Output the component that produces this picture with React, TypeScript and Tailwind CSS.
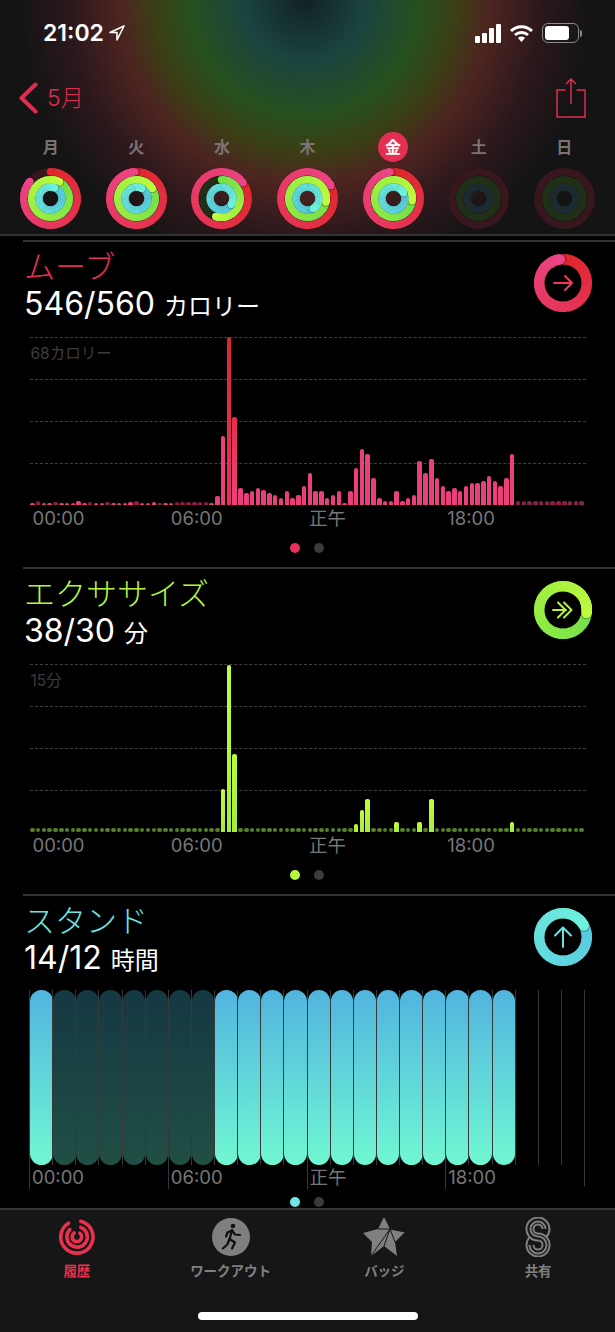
type Lap = { p: number; r: number; w: number; from: string; to: string; track: string };

const moveColors = { from: "#e0272c", to: "#ec4486", track: "#e0305a30" };
const exColors = { from: "#74e04a", to: "#bdfb3e", track: "#7fe03a26" };
const standColors = { from: "#58cae0", to: "#6ff0dc", track: "#55c0e026" };

function mix(a: string, b: string, t: number) {
  const c = (h: string, i: number) => parseInt(h.slice(i, i + 2), 16);
  const v = [1, 3, 5].map((i) => Math.round(c(a, i) + (c(b, i) - c(a, i)) * t));
  return `rgb(${v[0]},${v[1]},${v[2]})`;
}

function pt(r: number, deg: number, c: number) {
  const a = ((deg - 90) * Math.PI) / 180;
  return [c + r * Math.cos(a), c + r * Math.sin(a)];
}

function Arc({ lap, c }: { lap: Lap; c: number }) {
  const { p, r, w, from, to, track } = lap;
  const end = p * 360;
  const start = Math.max(0, end - 360);
  const segs = [];
  for (let d = start; d < end; d += 4) {
    const [x1, y1] = pt(r, d, c);
    const [x2, y2] = pt(r, Math.min(d + 6, end), c);
    segs.push({ d, path: `M${x1} ${y1}A${r} ${r} 0 0 1 ${x2} ${y2}`, color: mix(from, to, (d - start) / Math.max(end - start, 1)) });
  }
  const [hx, hy] = pt(r, end, c);
  const [sx, sy] = pt(r, end + 2, c);
  const [bx, by] = pt(r, start, c);
  return (
    <g fill="none">
      <circle cx={c} cy={c} r={r} stroke={track} strokeWidth={w} />
      {p > 0 && (
        <>
          {p <= 1 && <circle cx={bx} cy={by} r={w / 2} fill={from} />}
          {segs.map((s) => (
            <path key={s.d} d={s.path} stroke={s.color} strokeWidth={w} />
          ))}
          <circle cx={sx} cy={sy} r={w / 2 + 0.4} fill="#000" fillOpacity={0.3} />
          {segs.slice(-8).map((s) => (
            <path key={s.d} d={s.path} stroke={s.color} strokeWidth={w} />
          ))}
          <circle cx={hx} cy={hy} r={w / 2} fill={to} />
        </>
      )}
    </g>
  );
}

function DayRings({ move, ex, stand }: { move: number; ex: number; stand: number }) {
  return (
    <svg viewBox="0 0 61 61" className="w-[61px] h-[61px] mx-auto block">
      <circle cx="30.5" cy="30.5" r="19.25" fill="none" stroke="#111" strokeWidth="23" />
      <Arc c={30.5} lap={{ p: move, r: 26.7, w: 7.4, ...moveColors }} />
      <Arc c={30.5} lap={{ p: ex, r: 18.8, w: 7.4, ...exColors }} />
      <Arc c={30.5} lap={{ p: stand, r: 11.4, w: 7.2, ...standColors }} />
    </svg>
  );
}

const days = [
  { label: "月", move: 0.86, ex: 1.08, stand: 1.06 },
  { label: "火", move: 0.99, ex: 1.16, stand: 1.08 },
  { label: "水", move: 1.15, ex: 0.55, stand: 1.34 },
  { label: "木", move: 1.17, ex: 1.28, stand: 1.42 },
  { label: "金", move: 0.98, ex: 1.27, stand: 1.17 },
  { label: "土", move: 0, ex: 0, stand: 0 },
  { label: "日", move: 0, ex: 0, stand: 0 },
];

const moveBars = [
  2, 4, 2, 2, 3, 2, 2, 2, 4, 2, 3, 2, 2, 3, 2, 2, 2, 3, 4, 2, 2, 3, 2, 2, 2, 3, 3, 3, 3, 3, 3, 2, 9,
  69, 168, 88, 17, 12, 14, 17, 15, 12, 10, 7, 14, 7, 10, 19, 32, 14, 14, 7, 10, 14, 2, 14, 37, 56, 51, 27, 7, 4, 4, 14, 4, 7, 10,
  44, 32, 46, 27, 19, 14, 17, 14, 19, 22, 22, 24, 29, 24, 19, 27, 51,
];
const moveDim = [1, 4, 10, 13, 18, 22, 25, 26, 27, 28, 29, 30];

const exBars: Record<number, number> = { 33: 43, 34: 167, 35: 78, 56: 8, 57: 22, 58: 33, 63: 10, 67: 10, 69: 33, 83: 10 };

function CenterArrow({ kind, color }: { kind: "move" | "ex" | "stand"; color: string }) {
  return (
    <g fill="none" stroke={color} strokeWidth="2" strokeLinecap="round" strokeLinejoin="round">
      {kind === "move" && <path d="M20 29h18M31 22l7 7-7 7" />}
      {kind === "ex" && <path d="M19 29h13M24 21.500l7.500 7.500-7.500 7.500M30 21.500l7.500 7.500-7.500 7.500" />}
      {kind === "stand" && <path d="M29 39V20M21 27.500l8-8 8 8" />}
    </g>
  );
}

function BigRing({ kind, p, colors, arrow }: { kind: "move" | "ex" | "stand"; p: number; colors: typeof moveColors; arrow: string }) {
  return (
    <svg viewBox="0 0 58 58" className="w-[58px] h-[58px] mt-[5px] shrink-0">
      <Arc c={29} lap={{ p, r: 23.8, w: 10.4, ...colors }} />
      <CenterArrow kind={kind} color={arrow} />
    </svg>
  );
}

function SectionHead({ title, titleColor, value, unit, children }: { title: string; titleColor: string; value: string; unit: string; children: React.ReactNode }) {
  return (
    <div className="flex justify-between pr-[23px] h-[74px]">
      <div className="pl-px">
        <div className={`text-[31px] leading-[36px] font-light ${titleColor}`}>{title}</div>
        <div className="flex items-baseline h-[38px] text-white">
          <span className="text-[32px] leading-[38px]">{value}</span>
          <span className="text-[24px] leading-[38px] ml-[9px]">{unit}</span>
        </div>
      </div>
      {children}
    </div>
  );
}

function GridRows({ label }: { label: string }) {
  return (
    <div className="absolute inset-0 grid grid-rows-4">
      {[0, 1, 2, 3].map((i) => (
        <div key={i} className="border-t border-dashed border-[#404040]">
          {i === 0 && <div className="pl-px pt-[6px] text-[15.500px] leading-[20px] text-[#3c3c3c]">{label}</div>}
        </div>
      ))}
    </div>
  );
}

function AxisLabels() {
  return (
    <div className="grid grid-cols-4 h-[28px] items-center pl-[3px] text-[18.500px] text-[#777]">
      <span>00:00</span>
      <span>06:00</span>
      <span>正午</span>
      <span>18:00</span>
    </div>
  );
}

function PageDots({ active }: { active: string }) {
  return (
    <div className="flex justify-center gap-[14px] pr-[24px]">
      <span className={`w-[10px] h-[10px] rounded-full ${active}`} />
      <span className="w-[10px] h-[10px] rounded-full bg-[#3b3b3b]" />
    </div>
  );
}

function HistoryIcon() {
  return (
    <svg viewBox="0 0 40 40" className="w-[38px] h-[40px]" fill="none" stroke="#e8304f" strokeWidth="3.800" strokeLinecap="round">
      <path d="M24 3.500A17 17 0 1 1 11 5.500" />
      <path d="M24 9.800A10.800 10.800 0 1 1 12.500 12.200" />
      <path d="M23 16A5 5 0 1 1 17 15.800" />
    </svg>
  );
}

function WorkoutIcon() {
  return (
    <svg viewBox="0 0 38 40" className="w-[38px] h-[40px]">
      <circle cx="19" cy="20" r="19" fill="#7f7f7f" />
      <circle cx="21" cy="9" r="2.300" fill="#101010" />
      <g fill="none" stroke="#101010" strokeWidth="2.200" strokeLinecap="round" strokeLinejoin="round">
        <path d="M20 13l-2.500 9.500" />
        <path d="M20 13.500l-4.500 2-1.500 4" />
        <path d="M20 13.500l3 4 5 .5" />
        <path d="M17.500 22l5.500 3.500-3 6" />
        <path d="M17.500 22l-2.200 5.500-4.500 4" />
      </g>
    </svg>
  );
}

function BadgeIcon() {
  return (
    <svg viewBox="0 0 42 40" className="w-[42px] h-[40px]">
      <path d="M21 0l6 12 15 3-10 10 2 14-13-10-13 10 1-14L0 16l15-4z" fill="#808080" />
      <path d="M27 12L8 39M27 12L21 29M27 12l15 3M27 12l5 13M27 12L15 12" stroke="#161616" strokeWidth="1" fill="none" />
    </svg>
  );
}

function ShareIcon() {
  return (
    <svg viewBox="0 0 26 40" className="w-[26px] h-[40px]" fill="none" stroke="#808080" strokeWidth="2">
      <path d="M21.100 20.100A11.500 11.500 0 1 0 13 23.500A4.500 4.500 0 1 1 8.500 28" />
      <path d="M4.900 19.900A11.500 11.500 0 1 0 13 16.500A4.500 4.500 0 1 1 17.500 12" />
      <path d="M20.500 12A7.500 7.500 0 1 0 13 19.500A8.500 8.500 0 1 1 4.500 28" />
    </svg>
  );
}

export default function App() {
  return (
    <div className="w-[615px] h-[1332px] overflow-hidden bg-black flex flex-col [font-family:Inter,'Noto_Sans_CJK_JP',sans-serif]">
      <header className="h-[236px] shrink-0 border-b-2 border-[#333] bg-[#141414] bg-[radial-gradient(circle_at_305px_0px,#122125_0px,#1a4340_60px,#27501f_115px,#3a3f15_150px,#4d2420_185px,#2c181c_235px,#141414_285px)]">
        <div className="h-[66px] flex items-center justify-between pl-[43px] pr-[33px]">
          <div className="flex items-center gap-[5px] text-white">
            <span className="text-[23px] font-semibold">21:02</span>
            <svg viewBox="0 0 16 16" className="w-[16px] h-[16px]" fill="none" stroke="#fff" strokeWidth="1.600" strokeLinejoin="round">
              <path d="M15 1L1 7.500h7V15z" />
            </svg>
          </div>
          <div className="flex items-center gap-[8px]">
            <div className="flex items-end gap-[2px] h-[19px]">
              <span className="w-[5px] h-[7px] rounded-[1px] bg-white" />
              <span className="w-[5px] h-[10px] rounded-[1px] bg-white" />
              <span className="w-[5px] h-[15px] rounded-[1px] bg-white" />
              <span className="w-[5px] h-[19px] rounded-[1px] bg-white" />
            </div>
            <svg viewBox="0 0 25 19" className="w-[25px] h-[19px]" fill="none" stroke="#fff" strokeWidth="3">
              <path d="M2 7a15 15 0 0 1 21 0M6 11a9.500 9.500 0 0 1 13 0" />
              <path d="M12.500 18l-3.500-4a5 5 0 0 1 7 0z" fill="#fff" stroke="none" />
            </svg>
            <div className="flex items-center">
              <div className="w-[37px] h-[20px] rounded-[6px] border-[1.5px] border-[#8a8a8a] p-[2px]">
                <div className="w-[24px] h-full rounded-[3px] bg-white" />
              </div>
              <span className="w-[2px] h-[7px] ml-px rounded-r-full bg-[#8a8a8a]" />
            </div>
          </div>
        </div>
        <div className="h-[60px] mt-[2px] flex items-center justify-between pl-[19px] pr-[29px]">
          <div className="flex items-center gap-[9px] text-[#e02c50]">
            <svg viewBox="0 0 19 32" className="w-[19px] h-[32px]" fill="none" stroke="#e02c50" strokeWidth="4" strokeLinecap="round" strokeLinejoin="round">
              <path d="M16.500 2.500L2.500 16l14 13.500" />
            </svg>
            <span className="text-[23px] leading-[30px] font-light">5月</span>
          </div>
          <svg viewBox="0 0 30 40" className="w-[30px] h-[40px]" fill="none" stroke="#e02c50" strokeWidth="1.500">
            <path d="M9.500 12H1v27h28V12h-8.500M15 26V1M10 6l5-5 5 5" />
          </svg>
        </div>
        <div className="grid grid-cols-7 px-[8px]">
          {days.map((d) => (
            <div key={d.label}>
              <div className="h-[38px] flex items-center justify-center text-[16px] font-semibold text-[#7c7474]">
                {d.label === "金" ? (
                  <span className="w-[30px] h-[30px] rounded-full bg-[#e42f52] text-white flex items-center justify-center">{d.label}</span>
                ) : (
                  d.label
                )}
              </div>
              <div className="mt-[2px]">
                <DayRings move={d.move} ex={d.ex} stand={d.stand} />
              </div>
            </div>
          ))}
        </div>
      </header>

      <main className="flex-1 min-h-0 pt-[4px]">
        <section className="ml-[23px] h-[327px] border-t-2 border-[#333] pt-[7px]">
          <SectionHead title="ムーブ" titleColor="text-[#e6304f]" value="546/560" unit="カロリー">
            <BigRing kind="move" p={0.98} colors={moveColors} arrow="#f0385a" />
          </SectionHead>
          <div className="ml-[6.500px] w-[556px] mt-[14px]">
            <div className="relative h-[168px]">
              <GridRows label="68カロリー" />
              <div className="absolute inset-0 flex items-end">
                {Array.from({ length: 96 }).map((_, i) => {
                  const h = i < moveBars.length ? moveBars[i] : 4;
                  const dim = i >= moveBars.length || moveDim.includes(i);
                  return (
                    <div key={i} className="w-[5.79px] shrink-0 flex justify-center">
                      <div
                        className={`w-[4.500px] rounded-t-[2px] ${
                          dim
                            ? "bg-[#8a2048]"
                            : h > 100
                              ? "bg-gradient-to-t from-[#ea3060] to-[#d6282e]"
                              : h > 80
                                ? "bg-gradient-to-t from-[#ee4080] to-[#e62c50]"
                                : "bg-[#ea3f7c]"
                        }`}
                        style={{ height: h }}
                      />
                    </div>
                  );
                })}
              </div>
            </div>
            <AxisLabels />
          </div>
          <div className="mt-[10px]">
            <PageDots active="bg-[#e8305a]" />
          </div>
        </section>

        <section className="ml-[23px] h-[327px] border-t-2 border-[#333] pt-[7px]">
          <SectionHead title="エクササイズ" titleColor="text-[#b6f43c]" value="38/30" unit="分">
            <BigRing kind="ex" p={1.27} colors={exColors} arrow="#b6f43c" />
          </SectionHead>
          <div className="ml-[6.500px] w-[556px] mt-[14px]">
            <div className="relative h-[168px]">
              <GridRows label="15分" />
              <div className="absolute inset-0 flex items-end">
                {Array.from({ length: 96 }).map((_, i) => (
                  <div key={i} className="w-[5.79px] shrink-0 flex justify-center">
                    {exBars[i] ? (
                      <div className="w-[4.500px] rounded-t-[2px] bg-gradient-to-t from-[#a4ee3c] to-[#bffc3e]" style={{ height: exBars[i] }} />
                    ) : (
                      <div className="w-[4.500px] h-[4px] rounded-full bg-[#55802a]" />
                    )}
                  </div>
                ))}
              </div>
            </div>
            <AxisLabels />
          </div>
          <div className="mt-[10px]">
            <PageDots active="bg-[#b8f53c]" />
          </div>
        </section>

        <section className="ml-[23px] border-t-2 border-[#333] pt-[7px]">
          <SectionHead title="スタンド" titleColor="text-[#6be3e0]" value="14/12" unit="時間">
            <BigRing kind="stand" p={1.17} colors={standColors} arrow="#6be3e0" />
          </SectionHead>
          <div className="ml-[6px] w-[556px] mt-[13px]">
            <div className="flex h-[175px] border-r border-[#333]">
              {Array.from({ length: 24 }).map((_, i) => {
                const lit = i === 0 || (i >= 8 && i <= 20);
                const empty = i > 20;
                return (
                  <div key={i} className="w-[23.125px] shrink-0 border-l border-[#383838]">
                    {!empty && (
                      <div
                        className={`h-full w-[22.500px] rounded-full bg-gradient-to-b ${
                          lit ? "from-[#52b4de] to-[#71f7d2]" : "from-[#153843] to-[#204f44]"
                        }`}
                      />
                    )}
                  </div>
                );
              })}
            </div>
            <div className="grid grid-cols-4 h-[21px] border-r border-[#383838] text-[18.500px] leading-[24px] text-[#777]">
              {["00:00", "06:00", "正午", "18:00"].map((t) => (
                <span key={t} className="border-l border-[#383838] pl-[2px]">
                  {t}
                </span>
              ))}
            </div>
          </div>
          <div className="mt-[11px]">
            <PageDots active="bg-[#6ee8e8]" />
          </div>
        </section>
      </main>

      <nav className="h-[124px] shrink-0 border-t-2 border-[#333] bg-[#161616] flex flex-col">
        <div className="grid grid-cols-4 pt-[7px]">
          {[
            { label: "履歴", icon: <HistoryIcon />, color: "text-[#e8304f]" },
            { label: "ワークアウト", icon: <WorkoutIcon />, color: "text-[#808080]" },
            { label: "バッジ", icon: <BadgeIcon />, color: "text-[#808080]" },
            { label: "共有", icon: <ShareIcon />, color: "text-[#808080]" },
          ].map((t) => (
            <div key={t.label} className="flex flex-col items-center">
              <div className="h-[40px] flex items-center justify-center">{t.icon}</div>
              <span className={`mt-[6px] text-[13.500px] leading-[16px] font-semibold ${t.color}`}>{t.label}</span>
            </div>
          ))}
        </div>
        <div className="mt-auto mb-[12px] mx-auto w-[220px] h-[8px] rounded-full bg-white" />
      </nav>
    </div>
  );
}
